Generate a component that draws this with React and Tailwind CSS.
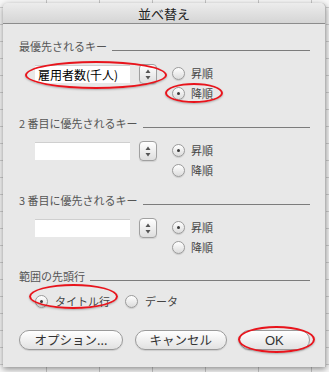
import React from 'react';

const font = "font-['Noto_Sans_CJK_JP','Noto_Sans',sans-serif]";

const Radio = ({ checked }) => (
  <span className="w-[13px] h-[13px] rounded-full border border-[#9b9b9b] bg-gradient-to-b from-white to-[#dcdcdc] shadow-[0_1px_1px_rgba(0,0,0,0.12)] flex items-center justify-center shrink-0">
    {checked && <span className="w-[3px] h-[3px] rounded-full bg-[#3a3a3a]" />}
  </span>
);

const RadioRow = ({ checked, label }) => (
  <div className="h-[20px] flex items-center gap-[6px]">
    <Radio checked={checked} />
    <span className="text-[11px] text-[#444] leading-none">{label}</span>
  </div>
);

const Stepper = () => (
  <div className="w-[18px] h-[20px] rounded-[4px] border border-[#a0a0a0] bg-gradient-to-b from-white to-[#dedede] flex items-center justify-center shadow-[0_1px_1px_rgba(0,0,0,0.1)]">
    <svg width="8" height="13" viewBox="0 0 8 13">
      <path d="M4 1.5 L6.5 5 L1.5 5 Z" fill="#555" />
      <path d="M4 11.5 L6.5 8 L1.5 8 Z" fill="#555" />
    </svg>
  </div>
);

const SectionLabel = ({ text, className = '' }) => (
  <div className={`flex h-[14px] items-center gap-[5px] ${className}`}>
    <span className="text-[11px] text-[#555] leading-none whitespace-nowrap">{text}</span>
    <div className="flex-1 h-px bg-[#7c7c7c] self-end mb-[2px]" />
  </div>
);

const KeyBlock = ({ label, value, order, labelClass }) => (
  <div>
    <SectionLabel text={label} className={labelClass} />
    <div className="flex items-start mt-[10px] pl-[16px]">
      <div className="w-[95px] h-[18px] mt-[2px] bg-white border-t border-[#cfcfcf] flex items-center pl-[3px] text-[12px] text-black leading-none">
        {value}
      </div>
      <div className="ml-[9px] mt-[1px]">
        <Stepper />
      </div>
      <div className="ml-[15px] flex flex-col">
        <RadioRow checked={order === 'asc'} label="昇順" />
        <RadioRow checked={order === 'desc'} label="降順" />
      </div>
    </div>
  </div>
);

const Button = ({ children, w }) => (
  <button className={`${w} h-[20px] rounded-full border border-[#9a9a9a] bg-gradient-to-b from-white to-[#e2e2e2] shadow-[0_1px_1px_rgba(0,0,0,0.12)] text-[12.5px] text-[#333] leading-none flex items-center justify-center`}>
    {children}
  </button>
);

const Ellipse = ({ cls }) => (
  <div className={`absolute rounded-[50%] border-2 border-[#e8141c] shadow-[0_1px_2px_rgba(0,0,0,0.25)] pointer-events-none ${cls}`} />
);

export default function App() {
  return (
    <div className={`relative w-[329px] h-[372px] overflow-hidden bg-[#f7f7f7] bg-[linear-gradient(to_right,#c6c6c6_1px,transparent_1px),linear-gradient(to_bottom,#d0d0d0_1px,transparent_1px)] bg-size-[53px_17px] bg-position-[46px_7px] pt-[3px] px-[3px] ${font}`}>
      {/* dialog window */}
      <div className="w-[323px] h-[364px] rounded-t-[5px] bg-[#e8e8e8] border-r border-[#b5b5b5] shadow-[0_2px_6px_rgba(0,0,0,0.45)] flex flex-col">
        <div className="h-[21px] rounded-t-[5px] bg-gradient-to-b from-[#ececec] to-[#d5d5d5] border-b border-[#8c8c8c] flex items-center justify-center">
          <span className="text-[13px] text-[#222] leading-none">並べ替え</span>
        </div>

        <div className="pl-[16px] pr-[15px] flex flex-col">
          <div className="mt-[15px]">
            <KeyBlock label="最優先されるキー" value="雇用者数(千人)" order="desc" />
          </div>
          <div className="mt-[13px]">
            <KeyBlock label="2 番目に優先されるキー" value="" order="asc" />
          </div>
          <div className="mt-[13px]">
            <KeyBlock label="3 番目に優先されるキー" value="" order="asc" />
          </div>

          <div className="mt-[12px]">
            <SectionLabel text="範囲の先頭行" />
            <div className="mt-[8px] pl-[16px] flex items-center h-[20px]">
              <div className="flex items-center gap-[7px]">
                <Radio checked />
                <span className="text-[11px] text-[#444] leading-none">タイトル行</span>
              </div>
              <div className="flex items-center gap-[7px] ml-[15px]">
                <Radio />
                <span className="text-[11px] text-[#444] leading-none">データ</span>
              </div>
            </div>
          </div>

          <div className="mt-[19px] flex items-center gap-[12px]">
            <Button w="w-[105px]">オプション...</Button>
            <Button w="w-[93px]">キャンセル</Button>
            <Button w="w-[72px]">
              <span className="font-['Liberation_Sans',sans-serif] text-[13px]">OK</span>
            </Button>
          </div>
        </div>
      </div>

      {/* red annotation marks */}
      <Ellipse cls="left-[25px] top-[61px] w-[142px] h-[28px]" />
      <Ellipse cls="left-[165px] top-[83px] w-[58px] h-[20px]" />
      <Ellipse cls="left-[29px] top-[284px] w-[89px] h-[25px]" />
      <Ellipse cls="left-[238px] top-[326px] w-[77px] h-[27px]" />
    </div>
  );
}
